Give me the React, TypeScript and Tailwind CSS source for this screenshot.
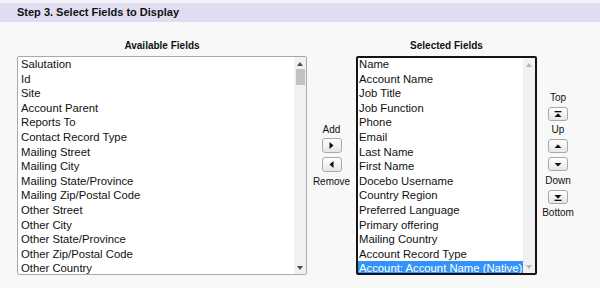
const available = [
  "Salutation",
  "Id",
  "Site",
  "Account Parent",
  "Reports To",
  "Contact Record Type",
  "Mailing Street",
  "Mailing City",
  "Mailing State/Province",
  "Mailing Zip/Postal Code",
  "Other Street",
  "Other City",
  "Other State/Province",
  "Other Zip/Postal Code",
  "Other Country",
];

const selected = [
  "Name",
  "Account Name",
  "Job Title",
  "Job Function",
  "Phone",
  "Email",
  "Last Name",
  "First Name",
  "Docebo Username",
  "Country Region",
  "Preferred Language",
  "Primary offering",
  "Mailing Country",
  "Account Record Type",
  "Account: Account Name (Native)",
];

function Arrow({ dir, bar }: { dir: "up" | "down" | "left" | "right"; bar?: boolean }) {
  if (dir === "right") {
    return (
      <svg width="5" height="7" viewBox="0 0 5 7">
        <path d="M0.5 0 L4.5 3.5 L0.5 7 Z" fill="#111" />
      </svg>
    );
  }
  if (dir === "left") {
    return (
      <svg width="5" height="7" viewBox="0 0 5 7">
        <path d="M4.5 0 L0.5 3.5 L4.5 7 Z" fill="#111" />
      </svg>
    );
  }
  if (dir === "up") {
    return (
      <svg width="8" height="7" viewBox="0 0 8 7">
        {bar && <rect x="0.5" y="0" width="7" height="1.3" fill="#111" />}
        <path d={bar ? "M4 2.2 L7.5 6 L0.5 6 Z" : "M4 1.5 L7.5 5 L0.5 5 Z"} fill="#111" />
      </svg>
    );
  }
  return (
    <svg width="8" height="7" viewBox="0 0 8 7">
      <path d={bar ? "M0.5 1 L7.5 1 L4 4.8 Z" : "M0.5 2 L7.5 2 L4 5.5 Z"} fill="#111" />
      {bar && <rect x="0.5" y="5.7" width="7" height="1.3" fill="#111" />}
    </svg>
  );
}

function Btn({ children, h = "h-[15px]" }: { children: React.ReactNode; h?: string }) {
  return (
    <div
      className={`flex ${h} w-[20px] items-center justify-center rounded-[3px] border border-[#a8a8a8] bg-gradient-to-b from-white to-[#e6e6e6]`}
    >
      {children}
    </div>
  );
}

function Scrollbar({ thumb, faded }: { thumb?: boolean; faded?: boolean }) {
  const c = faded ? "#b5b5b5" : "#505050";
  return (
    <div className="flex w-[12px] flex-col items-center bg-[#f1f1f1]">
      <svg className="mt-[5px]" width="6" height="4" viewBox="0 0 6 4">
        <path d="M3 0 L6 4 L0 4 Z" fill={c} />
      </svg>
      {thumb && <div className="mt-[3px] h-[16px] w-[9px] bg-[#c1c1c1]" />}
      <div className="flex-1" />
      <svg className="mb-[4px]" width="6" height="4" viewBox="0 0 6 4">
        <path d="M0 0 L6 0 L3 4 Z" fill={c} />
      </svg>
    </div>
  );
}

export default function App() {
  return (
    <div className="h-[288px] w-[600px] overflow-hidden bg-[#f8f8f8] font-['Liberation_Sans',Arial,sans-serif] text-[#111]">
      <div className="h-[3px] bg-[#f3f2f9]" />
      <div className="h-[19px] bg-[#e0ddf1] pl-[17px] text-[11px] font-bold leading-[19px]">
        Step 3. Select Fields to Display
      </div>

      <div className="flex pl-[17px] pt-[16px]">
        <div className="flex w-[290px] flex-col">
          <div className="mb-[2px] text-center text-[10px] font-bold leading-[16px]">Available Fields</div>
          <div className="flex h-[219px] overflow-hidden rounded-[2px] border border-[#a9a9a9] bg-white">
            <div className="flex-1 pl-[3px] text-[11.3px] leading-[14.6px]">
              {available.map((f) => (
                <div key={f} className="whitespace-nowrap">{f}</div>
              ))}
            </div>
            <Scrollbar thumb />
          </div>
        </div>

        <div className="flex w-[49px] flex-col items-center pt-[85px] text-[10px] leading-[13px]">
          <div>Add</div>
          <div className="mt-[2px]">
            <Btn>
              <Arrow dir="right" />
            </Btn>
          </div>
          <div className="mt-[4px]">
            <Btn>
              <Arrow dir="left" />
            </Btn>
          </div>
          <div className="mt-[3px]">Remove</div>
        </div>

        <div className="flex w-[181px] flex-col">
          <div className="mb-[2px] text-center text-[10px] font-bold leading-[16px]">Selected Fields</div>
          <div className="flex h-[219px] overflow-hidden rounded-[2px] border-2 border-[#151515] bg-white">
            <div className="-mt-[1px] min-w-0 flex-1 text-[11.3px] leading-[14.6px]">
              {selected.map((f, i) => (
                <div
                  key={f}
                  className={
                    i === selected.length - 1
                      ? "whitespace-nowrap bg-[#3393fa] pl-[1px] text-white"
                      : "whitespace-nowrap pl-[1px]"
                  }
                >
                  {f}
                </div>
              ))}
            </div>
            <Scrollbar faded />
          </div>
        </div>

        <div className="flex w-[42px] flex-col items-center pt-[53px] text-[10px] leading-[13px]">
          <div>Top</div>
          <div className="mt-[3px]">
            <Btn h="h-[14px]">
              <Arrow dir="up" bar />
            </Btn>
          </div>
          <div className="mt-[2px]">Up</div>
          <div className="mt-[3px]">
            <Btn h="h-[14px]">
              <Arrow dir="up" />
            </Btn>
          </div>
          <div className="mt-[4px]">
            <Btn h="h-[14px]">
              <Arrow dir="down" />
            </Btn>
          </div>
          <div className="mt-[3px]">Down</div>
          <div className="mt-[3px]">
            <Btn h="h-[14px]">
              <Arrow dir="down" bar />
            </Btn>
          </div>
          <div className="mt-[2px]">Bottom</div>
        </div>
      </div>
    </div>
  );
}
